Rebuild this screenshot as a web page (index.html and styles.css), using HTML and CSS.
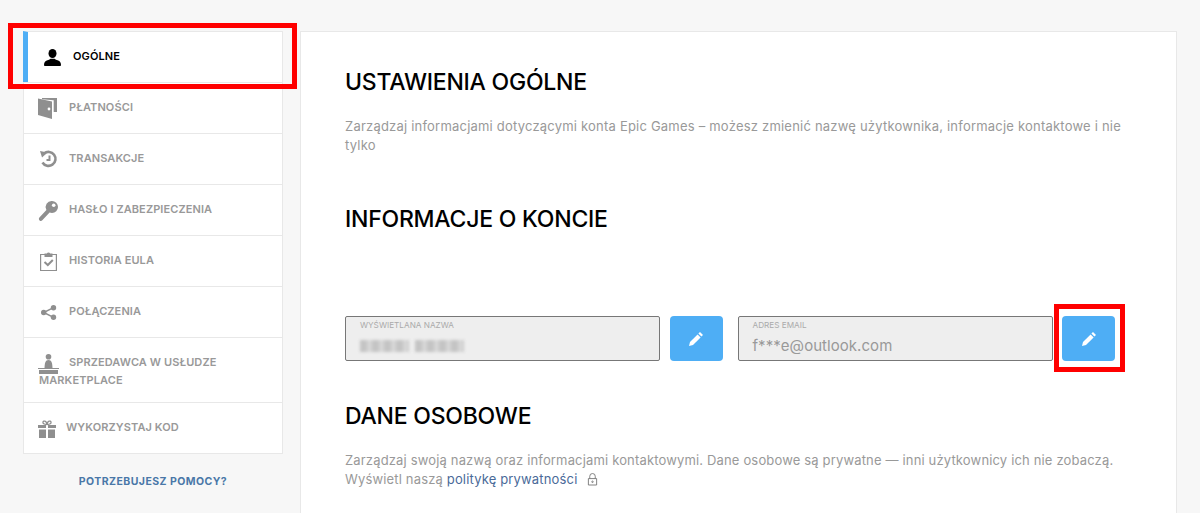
FILE: index.html
```html
<!DOCTYPE html>
<html lang="pl">
<head>
<meta charset="utf-8">
<title>Ustawienia ogólne</title>
<link rel="stylesheet" href="styles.css">
</head>
<body>
<div class="page">
  <aside class="side">
    <nav class="menu">
      <a class="item active"><svg class="ico" viewBox="0 0 20 20"><ellipse cx="9.500" cy="7.500" rx="4" ry="4.500"/><path d="M1 19c0-3 1.500-4.200 5-5.200l1.500-1h4l1.500 1c3.500 1 5 2.200 5 5.200 0 .7-.5 1-1.200 1H2.200C1.500 20 1 19.700 1 19z"/></svg>OGÓLNE</a>
      <a class="item"><svg class="ico" viewBox="0 0 20 20"><path d="M-1 1.500L13 4.500V22L-1 18z"/><path d="M3 1h15v14h-3.300V3.300L3 2.200z"/><circle cx="10" cy="12" r="1.400" fill="#fff"/></svg>PŁATNOŚCI</a>
      <a class="item"><svg class="ico" viewBox="0 0 20 20"><path class="ln" d="M5 5.500a7 7 0 1 1-1.500 9" stroke-width="2.600"/><path d="M1 3l7.500 1.500-5.500 5z"/><path class="ln" d="M10.500 7.500v4.500H7.500" stroke-width="2"/></svg>TRANSAKCJE</a>
      <a class="item"><svg class="ico" viewBox="0 0 20 20"><path d="M13 2a6 6 0 0 1 0 12c-.9 0-1.700-.2-2.400-.5l-7.300 7.800c-.8.800-1.800.8-2.700.1s-1-1.900-.2-2.800l7-7.700A6 6 0 0 1 13 2z"/><circle cx="14.700" cy="6.300" r="1.800" fill="#fff"/></svg>HASŁO I ZABEZPIECZENIA</a>
      <a class="item"><svg class="ico" viewBox="0 0 20 20"><path class="ln" d="M6 4.500H1.600v16H17.400v-16H13" stroke-width="1.200"/><path d="M5.500 3.500h2.300a2 2 0 0 1 3.400 0h2.300v3.500h-8z"/><path class="ln" d="M5.500 12l3.300 3 5-5" stroke-width="2"/></svg>HISTORIA EULA</a>
      <a class="item"><svg class="ico" viewBox="0 0 20 20"><circle cx="4.700" cy="11.500" r="2.700"/><circle cx="14.500" cy="6.700" r="2.700"/><circle cx="14.500" cy="16.300" r="2.700"/><path class="ln" d="M14.500 6.700l-9.800 4.800 9.800 4.800" stroke-width="1.500"/></svg>POŁĄCZENIA</a>
      <a class="item wrap"><svg class="ico" viewBox="0 0 20 20"><circle cx="9.500" cy="4.800" r="2.800"/><path d="M5.500 16c.2-5 .8-8 4-8s3.800 3 4 8z"/><path d="M-1 16h21v1H-1z"/><path d="M0 18h19v4H0z"/></svg>SPRZEDAWCA W USŁUDZE MARKETPLACE</a>
      <a class="item gift"><svg class="ico" viewBox="0 0 20 20"><path d="M-1 8h8v3H-1zM9 8h8v3H9zM0 12.500h7V21H0zM9 12.500h7V21H9z"/><path class="ln" d="M8 7.500C5 7.500 3.500 6.500 4 5s3.500-1.500 4 2.500C8.500 3.500 11.500 3.500 12 5s-1 2.500-4 2.500z" stroke-width="1.300"/></svg>WYKORZYSTAJ KOD</a>
    </nav>
    <a class="help">POTRZEBUJESZ POMOCY?</a>
  </aside>
  <main class="card">
    <h1 class="title first">USTAWIENIA OGÓLNE</h1>
    <p class="text lead">Zarządzaj informacjami dotyczącymi konta Epic Games – możesz zmienić nazwę użytkownika, informacje kontaktowe i nie tylko</p>
    <h2 class="title second">INFORMACJE O KONCIE</h2>
    <div class="fields">
      <div class="group">
        <div class="field"><span class="label">WYŚWIETLANA NAZWA</span><span class="value"><span class="blur b1"></span><span class="blur b2"></span></span></div>
        <button class="edit" type="button"><svg class="pen" viewBox="0 0 16 16"><path d="M12 1l3 3-1.600 1.600-3-3z"/><path d="M9.600 3.400l3 3L5 14l-4 1 1-4z"/></svg></button>
      </div>
      <div class="group">
        <div class="field"><span class="label">ADRES EMAIL</span><span class="value">f***e@outlook.com</span></div>
        <button class="edit" type="button"><svg class="pen" viewBox="0 0 16 16"><path d="M12 1l3 3-1.600 1.600-3-3z"/><path d="M9.600 3.400l3 3L5 14l-4 1 1-4z"/></svg></button>
      </div>
    </div>
    <h2 class="title third">DANE OSOBOWE</h2>
    <p class="text">Zarządzaj swoją nazwą oraz informacjami kontaktowymi. Dane osobowe są prywatne — inni użytkownicy ich nie zobaczą. Wyświetl naszą <a class="link">politykę prywatności</a><svg class="lock" viewBox="0 0 12 14"><path d="M3 6V3.500a3 3 0 0 1 6 0V6M1.500 6h9v7h-9z"/><circle cx="6" cy="9.500" r=".8"/></svg></p>
  </main>
</div>
<div class="mark mark-a"></div>
<div class="mark mark-b"></div>
</body>
</html>
```

FILE: styles.css
```css
html, body { margin: 0; height: 513px; overflow: hidden; }
body { background: #f7f7f7; font-family: Inter, "Liberation Sans", sans-serif; color: #000; position: relative; }
.page { display: flex; gap: 17px; padding: 31px 0 0 23px; height: 482px; overflow: hidden; }
.side { width: 260px; flex: none; }
.menu { background: #fff; border: 1px solid #e8e8e8; border-top: 0; }
.item { display: block; box-sizing: border-box; height: 51px; padding: 15px 0 0 15px; border-top: 1px solid #e8e8e8; font-size: 11px; font-weight: 600; letter-spacing: .1px; line-height: 18px; color: #999; }
.ico { display: inline-block; width: 20px; height: 20px; margin: -4px 10px -4px 0; overflow: visible; fill: #8f8f8f; vertical-align: -2px; }
.ln { fill: none; stroke: #8f8f8f; }
.active { margin-left: -1px; border-left: 5px solid #4eaef5; color: #000; }
.active .ico { fill: #000; }
.wrap { height: 65px; padding-right: 40px; }
.gift .ico { margin-right: 7px; }
.help { display: block; margin-top: 21px; text-align: center; font-size: 10.500px; font-weight: 700; letter-spacing: .45px; color: #4a77a8; }
.card { width: 877px; box-sizing: border-box; flex: none; background: #fff; border: 1px solid #e8e8e8; border-bottom: 0; padding: 0 50px 0 44px; }
.title { margin: 0; font-size: 23px; line-height: 28px; font-weight: 500; letter-spacing: -.23px; color: #000; }
.first { margin-top: 36px; }
.second { margin-top: 50px; }
.third { margin-top: 41px; }
.text { margin: 21px 0 0; font-size: 13px; line-height: 19px; letter-spacing: .16px; color: #999; }
.lead { letter-spacing: .21px; }
.link { color: #4a6a99; }
.lock { width: 11px; height: 13px; fill: none; stroke: #777; stroke-width: 1; margin-left: 10px; vertical-align: -2px; }
.fields { display: flex; gap: 15px; margin-top: 83px; width: 770px; }
.group { flex: 1; display: flex; justify-content: space-between; }
.field { box-sizing: border-box; width: 315px; height: 45px; background: #eee; border: 1px solid #777; border-radius: 2px; padding: 3px 14px 0; display: flex; flex-direction: column; }
.label { font-size: 8.200px; line-height: 11px; color: #aaa; }
.value { margin-top: 5px; font-size: 15px; line-height: 20px; letter-spacing: .05px; color: #999; display: flex; align-items: center; gap: 6px; }
.blur { display: block; height: 12px; margin-top: 4px; background: repeating-linear-gradient(90deg, #c4c4c4 0 7px, #d6d6d6 7px 12px); filter: blur(1.500px); }
.b1 { width: 49px; }
.b2 { width: 49px; }
.edit { width: 53px; height: 45px; border: 0; padding: 0; border-radius: 4px; background: #4eaef5; display: flex; align-items: center; justify-content: center; }
.pen { width: 16px; height: 16px; fill: #fff; }
.mark { position: absolute; box-sizing: border-box; border: 5px solid #f00; }
.mark-a { left: 8px; top: 23px; width: 289px; height: 66px; }
.mark-b { left: 1054px; top: 304px; width: 71px; height: 68px; }
```
